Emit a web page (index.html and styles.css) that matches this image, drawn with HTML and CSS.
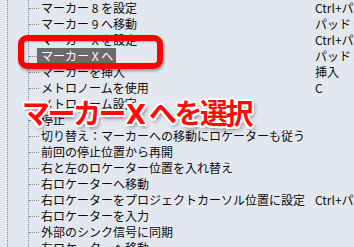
FILE: index.html
```html
<!DOCTYPE html>
<html lang="ja">
<head>
<meta charset="utf-8">
<link rel="stylesheet" href="styles.css">
</head>
<body>
<div class="pane">
  <div class="vline outer"></div>
  <div class="vline inner"></div>
  <ul class="tree">
    <li class="row"><span class="label">マーカー 8 を設定</span><span class="key">Ctrl+パッド</span></li>
    <li class="row"><span class="label">マーカー 9 へ移動</span><span class="key">パッド 9</span></li>
    <li class="row"><span class="label">マーカー X を設定</span><span class="key">Ctrl+パッド</span></li>
    <li class="row"><span class="label"><span class="sel">マーカー X へ</span></span><span class="key">パッド X</span></li>
    <li class="row"><span class="label">マーカーを挿入</span><span class="key">挿入</span></li>
    <li class="row"><span class="label">メトロノームを使用</span><span class="key">C</span></li>
    <li class="row"><span class="label">メトロノーム設定</span><span class="key"></span></li>
    <li class="row"><span class="label">停止</span><span class="key"></span></li>
    <li class="row"><span class="label">切り替え：マーカーへの移動にロケーターも従う</span><span class="key"></span></li>
    <li class="row"><span class="label">前回の停止位置から再開</span><span class="key"></span></li>
    <li class="row"><span class="label">右と左のロケーター位置を入れ替え</span><span class="key"></span></li>
    <li class="row"><span class="label">右ロケーターへ移動</span><span class="key"></span></li>
    <li class="row"><span class="label">右ロケーターをプロジェクトカーソル位置に設定</span><span class="key">Ctrl+パッド</span></li>
    <li class="row"><span class="label">右ロケーターを入力</span><span class="key"></span></li>
    <li class="row"><span class="label">外部のシンク信号に同期</span><span class="key"></span></li>
    <li class="row"><span class="label">左ロケーターへ移動</span><span class="key"></span></li>
  </ul>
  <div class="callout"></div>
  <div class="caption">マーカー<span class="x">X</span>へを選択</div>
</div>
</body>
</html>
```

FILE: styles.css
```css
html, body {
  margin: 0;
  padding: 0;
  background: #e3e8f0;
  overflow: hidden;
}

.pane {
  position: relative;
  width: 354px;
  height: 247px;
  overflow: hidden;
  font-family: "Noto Sans CJK JP", "Noto Sans", sans-serif;
  font-size: 12px;
  color: #0c0c0c;
}

.vline {
  position: absolute;
  top: 0;
  bottom: 0;
  border-left: 1px dotted #8c8c8c;
}
.vline.outer { left: 7px; }
.vline.inner { left: 28px; }

.tree {
  list-style: none;
  margin: 0;
  padding: 0;
}

.row {
  display: grid;
  grid-template-columns: 274px auto;
  height: 16px;
  line-height: 16px;
  padding-left: 41px;
  position: relative;
  white-space: nowrap;
}
.row::before {
  content: "";
  position: absolute;
  left: 29px;
  top: 8px;
  width: 10px;
  border-top: 1px dotted #8c8c8c;
}

.label {
  display: block;
}

.sel {
  display: inline-block;
  background: #6b6b6b;
  color: #fff;
  margin-left: -4px;
  padding: 0 3px 0 4px;
  height: 15px;
  line-height: 15px;
}

.key {
  display: block;
  overflow: hidden;
}

.callout {
  position: absolute;
  left: 18px;
  top: 35px;
  width: 133px;
  height: 22px;
  border: 6px solid #ff0000;
  border-radius: 9px;
  box-shadow: 1px 2px 3px rgba(0,0,0,0.35), inset 1px 1px 2px rgba(0,0,0,0.25);
}

.caption {
  position: absolute;
  left: 22px;
  top: 95px;
  font-family: "Noto Sans CJK JP", sans-serif;
  font-weight: 700;
  font-size: 28px;
  line-height: 34px;
  letter-spacing: -2.5px;
  color: #ff0a0a;
  white-space: nowrap;
  text-shadow:
    -1.5px -1.5px 0 #fff, 1.5px -1.5px 0 #fff, -1.5px 1.5px 0 #fff, 1.5px 1.5px 0 #fff,
    0 -2px 0 #fff, 0 2px 0 #fff, -2px 0 0 #fff, 2px 0 0 #fff,
    2px 3px 4px rgba(0,0,0,0.55);
}
.caption .x {
  font-family: "DejaVu Sans", sans-serif;
  font-weight: 900;
  font-size: 26px;
  letter-spacing: 0;
  margin: 0 3px 0 2px;
}
```
